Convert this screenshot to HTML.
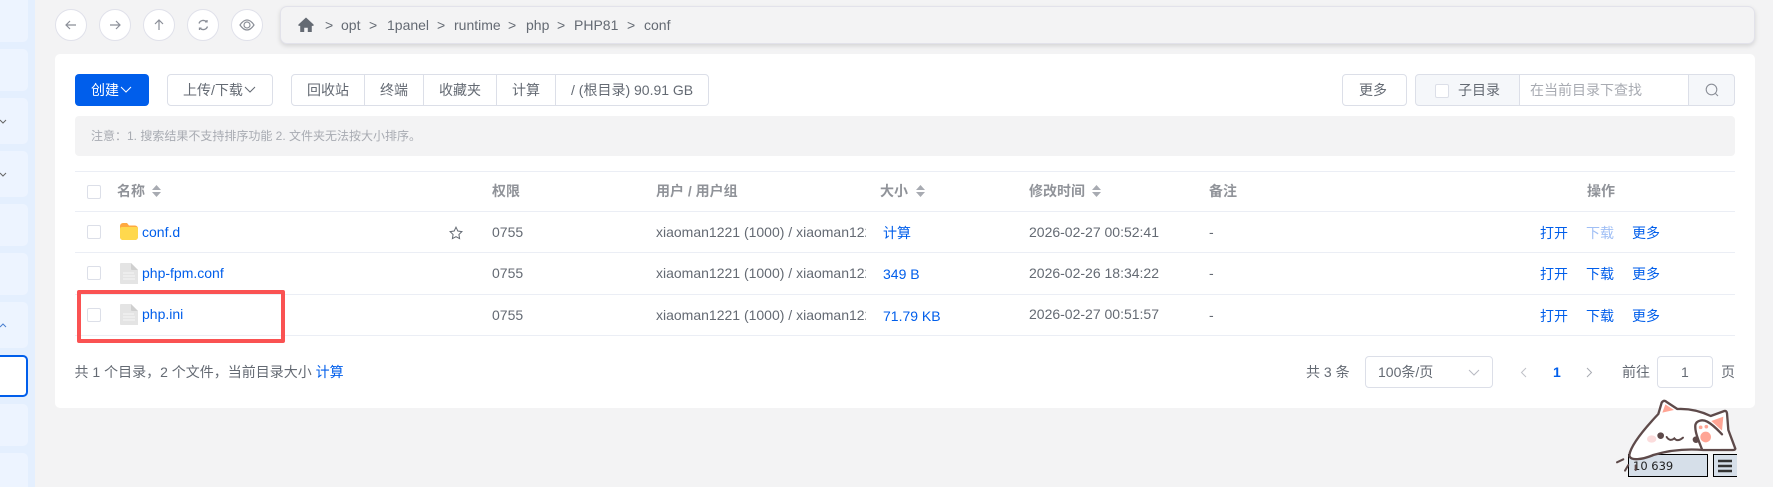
<!DOCTYPE html>
<html lang="zh"><head><meta charset="utf-8"><style>
*{box-sizing:border-box}
html,body{margin:0;padding:0;width:1773px;height:487px;overflow:hidden;background:#f3f3f4}
body{position:relative;font:14px/20px "Liberation Sans","Noto Sans CJK SC",sans-serif;color:#646a73}
.a,.t{position:absolute;white-space:nowrap}
.t{line-height:20px}
.sc{position:absolute;left:-8px;width:36px;background:#edf4ff;border-radius:5px}
.c{position:absolute;width:32px;height:32px;top:9px;border:1px solid #e0e1ea;border-radius:50%;background:#fff}
.c svg{position:absolute;left:6px;top:6px}
.bd{position:absolute;border:1px solid #dcdfe8;border-radius:4px;background:#fff}
.ln{position:absolute;left:75px;width:1660px;height:1px;background:#ebeef5}
.cb{position:absolute;width:14px;height:14px;border:1px solid #dcdfe8;border-radius:2px;background:#fff}
.h{font-weight:bold;color:#909399}
.b{color:#005eeb}
.sort{position:absolute;width:9px;height:12px}
</style></head><body>
<div class="a" style="left:0;top:0;width:35px;height:487px;background:#e4effe"></div>
<div class="sc" style="top:-10px;height:52px"></div>
<div class="sc" style="top:49px;height:42px"></div>
<div class="sc" style="top:98px;height:46px"></div>
<div class="sc" style="top:151px;height:46px"></div>
<div class="sc" style="top:204px;height:42px"></div>
<div class="sc" style="top:253px;height:42px"></div>
<div class="sc" style="top:302px;height:46px"></div>
<div class="sc" style="top:355px;height:42px;background:#fff;border:2px solid #005eeb"></div>
<div class="sc" style="top:404px;height:42px"></div>
<div class="sc" style="top:453px;height:50px"></div>
<svg class="a" style="left:0;top:0" width="12" height="340" fill="none" stroke="#666" stroke-width="1"><path d="M0 120l3 3 3-3M0 173l3 3 3-3"/><path d="M0 327l3-3 3 3" stroke="#4a7fd0"/></svg>

<div class="c" style="left:55px"><svg width="20" height="20" fill="none" stroke="#8b8f98" stroke-width="1.2"><path d="M4 9h10M8 5L4 9l4 4"/></svg></div>
<div class="c" style="left:99px"><svg width="20" height="20" fill="none" stroke="#8b8f98" stroke-width="1.2"><path d="M4 9h10M10 5l4 4-4 4"/></svg></div>
<div class="c" style="left:143px"><svg width="20" height="20" fill="none" stroke="#8b8f98" stroke-width="1.2"><path d="M9 14V4M5 8l4-4 4 4"/></svg></div>
<div class="c" style="left:187px"><svg width="20" height="20" fill="none" stroke="#8b8f98" stroke-width="1.3"><path d="M5 7.500a4.500 4.500 0 0 1 7.500-1.700M13.500 10.500a4.500 4.500 0 0 1-7.500 1.700M11 5.800h2V4M7.500 12.200h-2V14"/></svg></div>
<div class="c" style="left:231px"><svg width="20" height="20" fill="none" stroke="#8b8f98" stroke-width="1.2"><path d="M2 9C4 6 6.500 4 9 4s5 2 7 5c-2 3-4.500 5-7 5s-5-2-7-5z"/><circle cx="9" cy="9" r="3"/></svg></div>

<div class="a" style="left:280px;top:6px;width:1475px;height:38px;background:#f3f3f4;border:1px solid #e2e2ea;border-radius:7px;box-shadow:0 2px 5px rgba(0,0,0,.13)"></div>
<svg class="a" style="left:298px;top:17px" width="16" height="15" viewBox="0 0 18 16" preserveAspectRatio="none"><path d="M9 0.500L0.500 8v1.500H2.500V16H7v-4.500h4V16h4.500V9.500h2V8z" fill="#646a73"/></svg>
<span class="t" style="left:325px;top:15px">&gt;</span><span class="t" style="left:341px;top:15px">opt</span>
<span class="t" style="left:369px;top:15px">&gt;</span><span class="t" style="left:387px;top:15px">1panel</span>
<span class="t" style="left:437px;top:15px">&gt;</span><span class="t" style="left:454px;top:15px">runtime</span>
<span class="t" style="left:508px;top:15px">&gt;</span><span class="t" style="left:526px;top:15px">php</span>
<span class="t" style="left:557px;top:15px">&gt;</span><span class="t" style="left:574px;top:15px">PHP81</span>
<span class="t" style="left:627px;top:15px">&gt;</span><span class="t" style="left:644px;top:15px">conf</span>

<div class="a" style="left:55px;top:54px;width:1700px;height:354px;background:#fff;border-radius:5px"></div>

<div class="a" style="left:75px;top:74px;width:74px;height:32px;background:#005eeb;border-radius:4px"></div>
<span class="t" style="left:91px;top:80px;color:#fff">创建</span>
<svg class="a" style="left:120px;top:86px" width="12" height="8" fill="none" stroke="#fff"><path d="M1 1l5 5 5-5"/></svg>
<div class="bd" style="left:167px;top:74px;width:106px;height:32px"></div>
<span class="t" style="left:183px;top:80px">上传/下载</span>
<svg class="a" style="left:244px;top:86px" width="12" height="8" fill="none" stroke="#646a73"><path d="M1 1l5 5 5-5"/></svg>
<div class="bd" style="left:291px;top:74px;width:418px;height:32px"></div>
<div class="a" style="left:364px;top:75px;width:1px;height:30px;background:#dcdfe8"></div>
<div class="a" style="left:423px;top:75px;width:1px;height:30px;background:#dcdfe8"></div>
<div class="a" style="left:496px;top:75px;width:1px;height:30px;background:#dcdfe8"></div>
<div class="a" style="left:555px;top:75px;width:1px;height:30px;background:#dcdfe8"></div>
<span class="t" style="left:307px;top:80px">回收站</span>
<span class="t" style="left:380px;top:80px">终端</span>
<span class="t" style="left:439px;top:80px">收藏夹</span>
<span class="t" style="left:512px;top:80px">计算</span>
<span class="t" style="left:571px;top:80px">/ (根目录) 90.91 GB</span>

<div class="bd" style="left:1342px;top:74px;width:65px;height:32px"></div>
<span class="t" style="left:1359px;top:80px">更多</span>
<div class="bd" style="left:1415px;top:74px;width:320px;height:32px;background:#f5f7fa"></div>
<div class="a" style="left:1519px;top:75px;width:170px;height:30px;background:#fff;border-left:1px solid #dcdfe8;border-right:1px solid #dcdfe8"></div>
<div class="cb" style="left:1435px;top:84px"></div>
<span class="t" style="left:1458px;top:80px">子目录</span>
<span class="t" style="left:1530px;top:80px;color:#a8abb2">在当前目录下查找</span>
<svg class="a" style="left:1705px;top:83px" width="14" height="14" fill="none" stroke="#8b8f98" stroke-width="1.100"><circle cx="6.500" cy="6.500" r="5.300"/><path d="M10.500 10.500l2.500 2.500"/></svg>

<div class="a" style="left:75px;top:116px;width:1660px;height:40px;background:#f3f3f4;border-radius:4px"></div>
<span class="t" style="left:91px;top:126px;font-size:12px;color:#a8abb2">注意：1. 搜索结果不支持排序功能 2. 文件夹无法按大小排序。</span>

<div class="ln" style="top:171px"></div><div class="ln" style="top:211px"></div><div class="ln" style="top:252px"></div><div class="ln" style="top:294px"></div><div class="ln" style="top:335px"></div>

<div class="cb" style="left:87px;top:185px"></div>
<div class="cb" style="left:87px;top:225px"></div>
<div class="cb" style="left:87px;top:266px"></div>
<div class="cb" style="left:87px;top:308px"></div>

<span class="t h" style="left:117px;top:181px">名称</span>
<svg class="sort" style="left:152px;top:185px"><path d="M4.500 0L9 5H0zM4.500 12L0 7h9z" fill="#a8abb2"/></svg>
<span class="t h" style="left:492px;top:181px">权限</span>
<span class="t h" style="left:656px;top:181px">用户 / 用户组</span>
<span class="t h" style="left:880px;top:181px">大小</span>
<svg class="sort" style="left:916px;top:185px"><path d="M4.500 0L9 5H0zM4.500 12L0 7h9z" fill="#a8abb2"/></svg>
<span class="t h" style="left:1029px;top:181px">修改时间</span>
<svg class="sort" style="left:1092px;top:185px"><path d="M4.500 0L9 5H0zM4.500 12L0 7h9z" fill="#a8abb2"/></svg>
<span class="t h" style="left:1209px;top:181px">备注</span>
<span class="t h" style="left:1587px;top:181px">操作</span>

<svg class="a" style="left:120px;top:223px" width="18" height="17"><path d="M0 3a3 3 0 0 1 3-3h4l2 2.500h6a3 3 0 0 1 3 3V14a3 3 0 0 1-3 3H3a3 3 0 0 1-3-3z" fill="#ffa940"/><path d="M0 6a2 2 0 0 1 2-2h14a2 2 0 0 1 2 2v8a3 3 0 0 1-3 3H3a3 3 0 0 1-3-3z" fill="#ffd84d"/></svg>
<span class="t b" style="left:142px;top:222px">conf.d</span>
<svg class="a" style="left:449px;top:226px" width="14" height="14" fill="none" stroke="#646a73" stroke-width="1"><path d="M7 1.200l1.800 3.800 4.100.6-3 2.900.7 4.100L7 10.700l-3.600 1.900.7-4.100-3-2.900 4.100-.6z"/></svg>

<svg class="a" style="left:120px;top:263px" width="18" height="21"><path d="M1 0h10l7 7v14H1a1 1 0 0 1-1-1V1a1 1 0 0 1 1-1z" fill="#e4e4e4"/><path d="M11 0l7 7h-6a1 1 0 0 1-1-1z" fill="#cfcfcf"/><path d="M3 10h11M3 13h12M3 16h12" stroke="#f6f6f6"/></svg>
<span class="t b" style="left:142px;top:263px">php-fpm.conf</span>
<svg class="a" style="left:120px;top:304px" width="18" height="21"><path d="M1 0h10l7 7v14H1a1 1 0 0 1-1-1V1a1 1 0 0 1 1-1z" fill="#e4e4e4"/><path d="M11 0l7 7h-6a1 1 0 0 1-1-1z" fill="#cfcfcf"/><path d="M3 10h11M3 13h12M3 16h12" stroke="#f6f6f6"/></svg>
<span class="t b" style="left:142px;top:304px">php.ini</span>

<span class="t" style="left:492px;top:222px">0755</span>
<span class="t" style="left:492px;top:263px">0755</span>
<span class="t" style="left:492px;top:305px">0755</span>
<div class="t" style="left:656px;top:222px;width:210px;overflow:hidden">xiaoman1221 (1000) / xiaoman1221 (1000)</div>
<div class="t" style="left:656px;top:263px;width:210px;overflow:hidden">xiaoman1221 (1000) / xiaoman1221 (1000)</div>
<div class="t" style="left:656px;top:305px;width:210px;overflow:hidden">xiaoman1221 (1000) / xiaoman1221 (1000)</div>
<span class="t b" style="left:883px;top:223px">计算</span>
<span class="t b" style="left:883px;top:264px">349 B</span>
<span class="t b" style="left:883px;top:306px">71.79 KB</span>
<span class="t" style="left:1029px;top:222px">2026-02-27 00:52:41</span>
<span class="t" style="left:1029px;top:263px">2026-02-26 18:34:22</span>
<span class="t" style="left:1029px;top:304px">2026-02-27 00:51:57</span>
<span class="t" style="left:1209px;top:222px">-</span>
<span class="t" style="left:1209px;top:263px">-</span>
<span class="t" style="left:1209px;top:305px">-</span>

<span class="t b" style="left:1540px;top:223px">打开</span><span class="t" style="left:1586px;top:223px;color:#a0bff5">下载</span><span class="t b" style="left:1632px;top:223px">更多</span>
<span class="t b" style="left:1540px;top:264px">打开</span><span class="t b" style="left:1586px;top:264px">下载</span><span class="t b" style="left:1632px;top:264px">更多</span>
<span class="t b" style="left:1540px;top:306px">打开</span><span class="t b" style="left:1586px;top:306px">下载</span><span class="t b" style="left:1632px;top:306px">更多</span>

<div class="a" style="left:77px;top:290px;width:208px;height:53px;border:4px solid #fa5252;border-radius:2px"></div>

<span class="t" style="left:74.500px;top:362px">共 1 个目录，2 个文件，当前目录大小 <span class="b">计算</span></span>

<span class="t" style="left:1306px;top:362px">共 3 条</span>
<div class="bd" style="left:1365px;top:356px;width:128px;height:32px"></div>
<span class="t" style="left:1378px;top:362px">100条/页</span>
<svg class="a" style="left:1468px;top:369px" width="12" height="8" fill="none" stroke="#b8bac2" stroke-width="1"><path d="M1 1l5 5 5-5"/></svg>
<svg class="a" style="left:1520px;top:367px" width="8" height="11" fill="none" stroke="#c0c2c8"><path d="M6 1L1.500 5.500 6 10"/></svg>
<span class="t b" style="left:1553px;top:362px;font-weight:bold">1</span>
<svg class="a" style="left:1585px;top:367px" width="8" height="11" fill="none" stroke="#a8abb2"><path d="M2 1l4.500 4.500L2 10"/></svg>
<span class="t" style="left:1622px;top:362px">前往</span>
<div class="bd" style="left:1657px;top:356px;width:56px;height:32px"></div>
<span class="t" style="left:1681px;top:362px">1</span>
<span class="t" style="left:1721px;top:362px">页</span>

<div class="a" style="left:1628px;top:454px;width:80px;height:23px;background:#d6dfe9;border:1px solid #000"></div>
<span class="t" style="left:1633px;top:456px;font:11.500px/20px 'DejaVu Sans',sans-serif;color:#222">10 639</span>
<div class="a" style="left:1713px;top:454px;width:24px;height:23px;background:#d6dfe9;border:1px solid #000;border-right:none"></div>
<svg class="a" style="left:1717px;top:459px" width="16" height="14" fill="none" stroke="#333" stroke-width="2.400"><path d="M1 2h14M1 7h14M1 12h14"/></svg>
<svg class="a" style="left:1590px;top:390px" width="183" height="97" viewBox="0 0 549 291">
<path d="M118 195C122 170 150 130 205 72L215 38Q222 28 230 36L262 57C300 55 335 65 362 78L403 63Q410 62 411 70L415 120 436 176Q436 180 428 180H340C290 176 240 180 190 195 160 208 118 215 118 195Z" fill="#fff" stroke="#5e4a4a" stroke-width="7" stroke-linejoin="round"/>
<path d="M226 43L217 68 252 60Z" fill="#ffa595"/><path d="M400 80L364 93 396 122Z" fill="#ffa595"/>
<ellipse cx="185" cy="147" rx="14" ry="11" fill="#fbdcdc"/><circle cx="212" cy="137" r="10" fill="#5e4a4a"/><circle cx="318" cy="149" r="10" fill="#5e4a4a"/>
<path d="M230 141Q240 156 253 145 263 157 279 143" fill="none" stroke="#5e4a4a" stroke-width="6" stroke-linecap="round"/>
<path d="M336 176C325 150 314 125 316 105 320 90 338 88 352 95 375 108 400 135 418 165 414 174 400 176 385 176 Z" fill="#fff"/>
<path d="M336 178C325 150 314 125 316 105 320 90 338 88 352 95 372 106 385 122 396 133" fill="none" stroke="#5e4a4a" stroke-width="7" stroke-linecap="round"/>
<circle cx="347" cy="141" r="16" fill="#ffa595"/><circle cx="332" cy="112" r="5.500" fill="#ffa595"/><circle cx="349" cy="110" r="5.500" fill="#ffa595"/>
<path d="M81 217L100 208M105 242L115 225M137 226V240" stroke="#5e4a4a" stroke-width="6" stroke-linecap="round"/>
</svg>
</body></html>
